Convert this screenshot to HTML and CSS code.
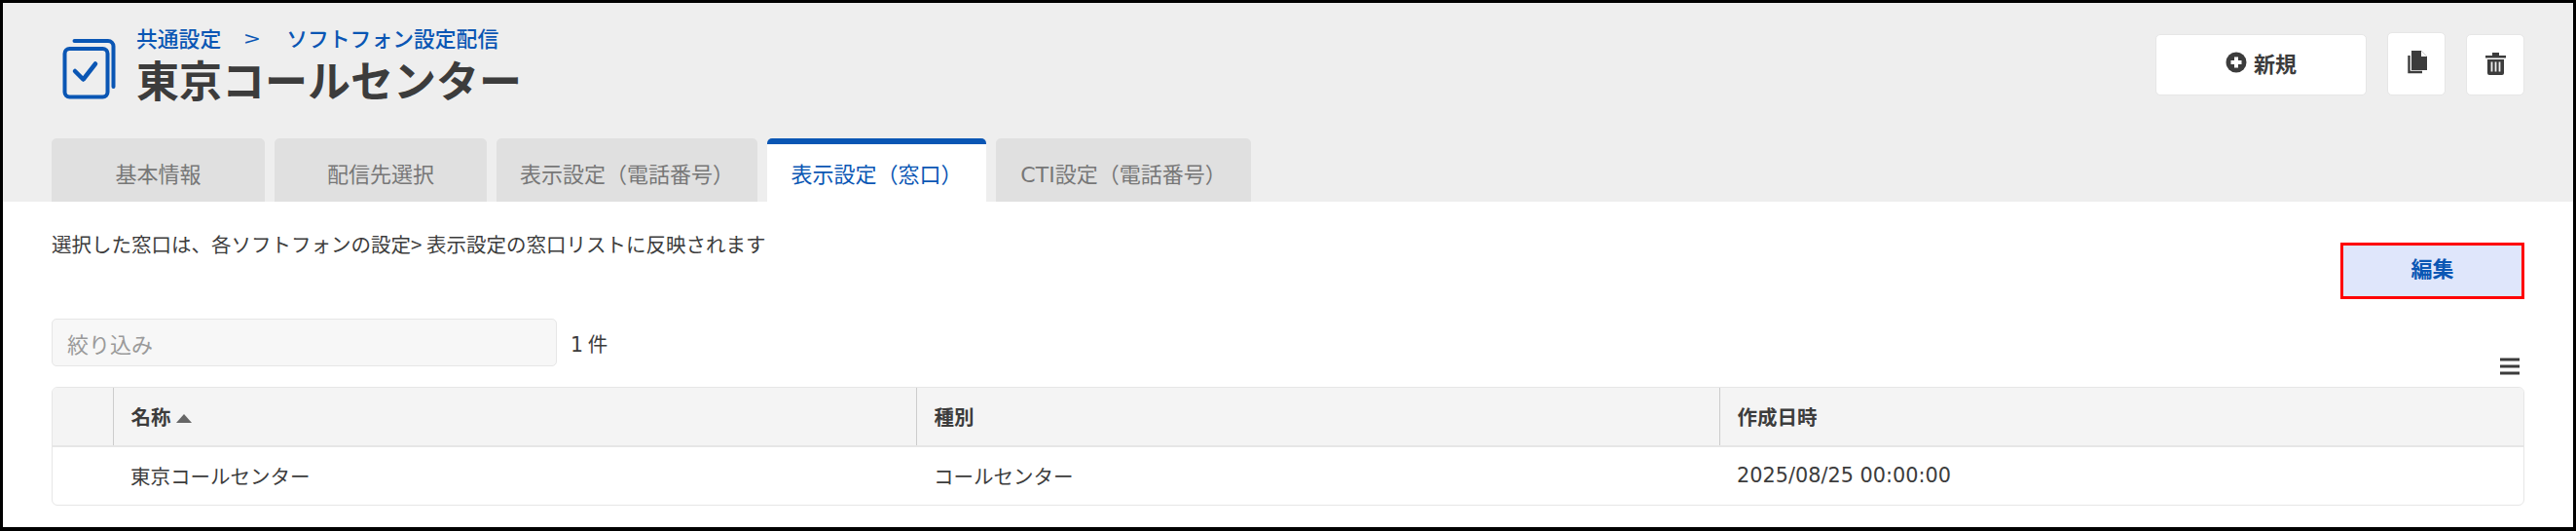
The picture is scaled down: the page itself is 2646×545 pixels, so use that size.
FILE: index.html
```html
<!DOCTYPE html>
<html lang="ja">
	<head>
		<meta charset="utf-8">
		<title>東京コールセンター</title>
		<link rel="stylesheet" href="styles.css">
	</head>
	<body>
		<div class="frame">
			<div class="header">
				<div class="head-row">
					<div class="title-block">
						<svg class="title-icon" viewBox="60 38 62 66" width="62" height="66">
							<rect x="66.5" y="50" width="44" height="49.5" rx="5" fill="none" stroke="#0a56b4" stroke-width="4"/>
							<path d="M76.5 42H111a5.5 5.5 0 0 1 5.5 5.5V89" fill="none" stroke="#0a56b4" stroke-width="4" stroke-linecap="round"/>
							<path d="M77 73l8.500 8.500L98 65.500" fill="none" stroke="#0a56b4" stroke-width="4.5" stroke-linecap="round" stroke-linejoin="round"/>
						</svg>
						<div class="title-text">
							<div class="crumbs"><span>共通設定</span><span class="crumb-sep">&gt;</span><span>ソフトフォン設定配信</span></div>
							<h1>東京コールセンター</h1>
						</div>
					</div>
					<div class="actions">
						<button class="btn btn-new">
							<svg viewBox="0 0 22 22" width="22" height="22">
								<circle cx="11" cy="11" r="10.5" fill="#3c3c3c"/>
								<path d="M11 5.5v11M5.5 11h11" stroke="#fff" stroke-width="4"/>
							</svg>
							新規
						</button>
						<button class="btn btn-icon btn-tall">
							<svg viewBox="0 0 21 24" width="21" height="24">
								<path d="M5 0h10l6 6v14H5z" fill="#3c3c3c"/>
								<path d="M15 0v6h6" fill="#fff"/>
								<path d="M2.5 5v17H16" fill="none" stroke="#3c3c3c" stroke-width="2.4"/>
							</svg>
						</button>
						<button class="btn btn-icon">
							<svg viewBox="0 0 21 24" width="21" height="24">
								<path d="M0 4h21v2.500H0zM7 1h7v3H7z" fill="#3c3c3c"/>
								<path d="M2 8h17v14a2 2 0 0 1-2 2H4a2 2 0 0 1-2-2z" fill="#3c3c3c"/>
								<path d="M6.500 10.500v10M10.500 10.500v10M14.500 10.500v10" stroke="#eee" stroke-width="1.800"/>
							</svg>
						</button>
					</div>
				</div>
				<div class="tabs">
					<div class="tab tab-a">基本情報</div>
					<div class="tab tab-b">配信先選択</div>
					<div class="tab tab-c">表示設定（電話番号）</div>
					<div class="tab tab-d active">表示設定（窓口）</div>
					<div class="tab tab-e"><span class="latin">CTI</span>設定（電話番号）</div>
				</div>
			</div>
			<div class="main">
				<div class="desc-row">
					<div class="desc">選択した窓口は、各ソフトフォンの設定&gt; 表示設定の窓口リストに反映されます</div>
					<button class="btn-edit">編集</button>
				</div>
				<div class="filter-row">
					<input class="filter" type="text" placeholder="絞り込み">
					<span class="count"><span class="latin">1</span> 件</span>
					<svg class="menu-icon" viewBox="0 0 20 18" width="20" height="18">
						<path d="M0 2h20M0 9h20M0 16h20" stroke="#3c3c3c" stroke-width="3"/>
					</svg>
				</div>
				<div class="table-wrap">
					<table>
						<colgroup>
							<col class="col-check">
							<col class="col-name">
							<col class="col-type">
							<col>
						</colgroup>
						<thead>
							<tr>
								<th></th>
								<th>名称<span class="sort"></span></th>
								<th>種別</th>
								<th>作成日時</th>
							</tr>
						</thead>
						<tbody>
							<tr>
								<td></td>
								<td>東京コールセンター</td>
								<td>コールセンター</td>
								<td class="date">2025/08/25 00:00:00</td>
							</tr>
						</tbody>
					</table>
				</div>
			</div>
		</div>
	</body>
</html>
```

FILE: styles.css
```css
*
{
	box-sizing: border-box;
}
body
{
	margin: 0;
	background: #000000;
	color: #3c3c3c;
	font-family: "Noto Sans CJK JP", "Noto Sans", sans-serif;
}
.frame
{
	height: 545px;
	border: solid #000000;
	border-width: 3px 3px 4px 3px;
	background: #ffffff;
}
.latin
{
	font-family: "DejaVu Sans", sans-serif;
}

.header
{
	height: 204px;
	background: #eeeeee;
	padding: 0 50px;
}
.head-row
{
	height: 139px;
	display: flex;
	justify-content: space-between;
}
.title-block
{
	display: flex;
	padding: 21px 0 0 7px;
}
.title-icon
{
	margin: 14px 0 0 0;
}
.title-text
{
	margin-left: 18px;
}
.crumbs
{
	color: #0a56b4;
	font-size: 21.800px;
	font-weight: 500;
	line-height: 30px;
}
.crumb-sep
{
	display: inline-block;
	width: 16px;
	margin: 0 27px 0 24px;
	font-weight: 400;
	line-height: 1;
	text-align: center;
	transform: scaleX(1.3);
}
h1
{
	margin: 0;
	font-size: 44px;
	line-height: 55px;
	font-weight: 700;
	color: #3c3c3c;
}

.actions
{
	display: flex;
	align-items: flex-end;
	gap: 21px;
	padding-bottom: 44px;
}
.btn
{
	height: 63px;
	border: 1px solid #e6e6e6;
	border-radius: 5px;
	background: #ffffff;
	color: #3c3c3c;
	font-family: inherit;
	font-size: 22px;
	font-weight: 700;
	display: flex;
	align-items: center;
	justify-content: center;
	padding: 0;
}
.btn-new
{
	width: 217px;
	gap: 7px;
	padding-bottom: 5px;
}
.btn-icon
{
	width: 60px;
	padding-bottom: 4px;
}
.btn-tall
{
	height: 65px;
}

.tabs
{
	display: flex;
	gap: 10px;
	height: 65px;
}
.tab
{
	background: #e0e0e0;
	color: #777777;
	font-size: 22px;
	border-radius: 5px 5px 0 0;
	text-align: center;
	padding-top: 19px;
	white-space: nowrap;
}
.tab-a
{
	width: 219px;
}
.tab-b
{
	width: 218px;
}
.tab-c
{
	width: 268px;
}
.tab-d
{
	width: 225px;
}
.tab-e
{
	width: 262px;
}
.tab.active
{
	background: #ffffff;
	color: #0a56b4;
	border-top: 6px solid #0a56b4;
	padding-top: 13px;
}

.main
{
	padding: 30px 50px 0 50px;
}
.desc-row
{
	display: flex;
	justify-content: space-between;
}
.desc
{
	font-size: 20.500px;
	line-height: 26px;
}
.btn-edit
{
	width: 189px;
	height: 58px;
	margin-top: 12px;
	border: 3px solid #ff0000;
	background: #dfe6fb;
	color: #0a56b4;
	font-family: inherit;
	font-size: 22px;
	font-weight: 700;
	padding: 0 0 8px 0;
}

.filter-row
{
	display: flex;
	height: 58px;
	margin-top: 20px;
}
.filter
{
	width: 519px;
	height: 49px;
	border: 1px solid #e6e6e6;
	border-radius: 5px;
	background: #f7f7f7;
	font-family: inherit;
	font-size: 22px;
	padding: 0 15px;
}
.filter::placeholder
{
	color: #9a9a9a;
}
.count
{
	margin-left: 14px;
	font-size: 20.500px;
	line-height: 50px;
}
.menu-icon
{
	margin-left: auto;
	margin-right: 5px;
	align-self: flex-end;
}

.table-wrap
{
	margin-top: 12px;
	height: 122px;
	border: 1px solid #e6e6e6;
	border-radius: 6px;
	overflow: hidden;
}
table
{
	width: 100%;
	table-layout: fixed;
	border-collapse: collapse;
}
.col-check
{
	width: 62px;
}
.col-name
{
	width: 825px;
}
.col-type
{
	width: 825px;
}
th
{
	height: 60px;
	background: #f4f4f4;
	border-bottom: 2px solid #e6e6e6;
	border-left: 1px solid #cccccc;
	font-size: 20.500px;
	font-weight: 700;
	text-align: left;
	padding: 0 18px 2px 18px;
}
th:first-child
{
	border-left: none;
}
td
{
	height: 60px;
	font-size: 20.500px;
	padding: 0 18px 2px 18px;
}
.date
{
	font-family: "DejaVu Sans", sans-serif;
	font-size: 20.800px;
}
.sort
{
	display: inline-block;
	margin-left: 5px;
	vertical-align: 2px;
	border: solid transparent;
	border-width: 0 8px 9px 8px;
	border-bottom-color: #666666;
}
```
